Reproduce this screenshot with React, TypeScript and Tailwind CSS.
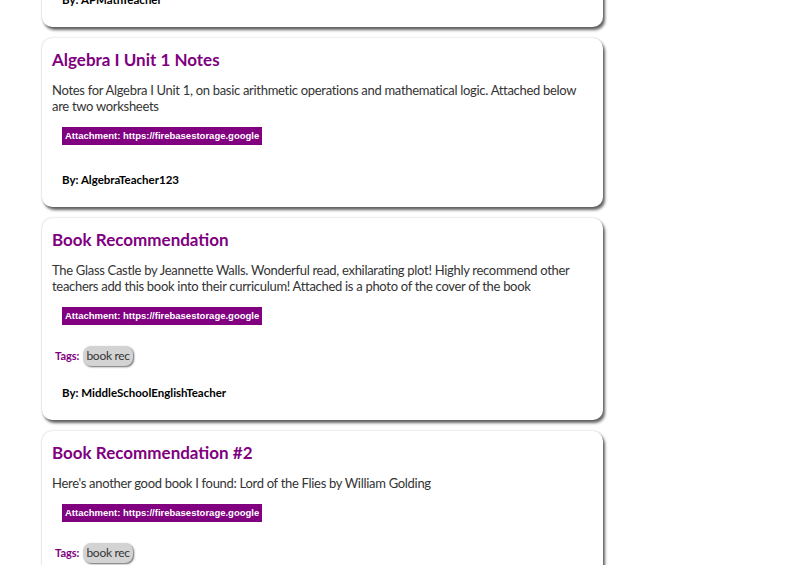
import React from 'react';

type Post = {
  title: string;
  body: string;
  attachment: string;
  tags: string[];
  author: string;
};

const posts: Post[] = [
  {
    title: 'AP Calculus Review',
    body: 'Practice problems for the upcoming AP exam.',
    attachment: 'https://firebasestorage.google',
    tags: [],
    author: 'APMathTeacher',
  },
  {
    title: 'Algebra I Unit 1 Notes',
    body: 'Notes for Algebra I Unit 1, on basic arithmetic operations and mathematical logic. Attached below are two worksheets',
    attachment: 'https://firebasestorage.google',
    tags: [],
    author: 'AlgebraTeacher123',
  },
  {
    title: 'Book Recommendation',
    body: 'The Glass Castle by Jeannette Walls. Wonderful read, exhilarating plot! Highly recommend other teachers add this book into their curriculum! Attached is a photo of the cover of the book',
    attachment: 'https://firebasestorage.google',
    tags: ['book rec'],
    author: 'MiddleSchoolEnglishTeacher',
  },
  {
    title: 'Book Recommendation #2',
    body: "Here's another good book I found: Lord of the Flies by William Golding",
    attachment: 'https://firebasestorage.google',
    tags: ['book rec'],
    author: 'MiddleSchoolEnglishTeacher',
  },
];

const PostCard: React.FC<{ post: Post; className?: string }> = ({ post, className = '' }) => (
  <div
    className={`w-[561px] rounded-[10px] bg-white pl-[10px] pr-[12px] pt-[10px] pb-[19px] shadow-[0_0_2px_rgba(0,0,0,0.25),2px_3px_3px_rgba(0,0,0,0.6)] ${className}`}
  >
    <h3 className="text-[17px] leading-[24px] font-bold text-[#800080]">{post.title}</h3>
    <p className="mt-[10px] text-[13px] leading-[16px] tracking-[-0.3px] text-[#333]">{post.body}</p>
    <div className="mt-[13px] ml-[10px] flex">
      <span className="h-[18px] bg-[#800080] px-[3px] font-['Liberation_Sans',Arial,sans-serif] text-[9.5px] leading-[18px] font-bold text-white">
        Attachment: {post.attachment}
      </span>
    </div>
    {post.tags.length > 0 && (
      <div className="mt-[21px] ml-[3px] flex h-[20px] items-center gap-[4px]">
        <span className="text-[11px] leading-[20px] font-bold text-[#800080]">Tags:</span>
        {post.tags.map((t) => (
          <span
            key={t}
            className="h-[20px] rounded-[8px] bg-[#d3d3d3] px-[3px] text-[12px] leading-[20px] tracking-[-0.3px] text-[#333] shadow-[1px_1px_2px_rgba(0,0,0,0.6)]"
          >
            {t}
          </span>
        ))}
      </div>
    )}
    <p className={`${post.tags.length > 0 ? 'mt-[19px]' : 'mt-[27px]'} ml-[10px] text-[11.5px] leading-[16px] font-bold text-black`}>
      By: {post.author}
    </p>
  </div>
);

export default function App() {
  return (
    <div className="min-h-screen overflow-hidden bg-white pl-[42px] font-['Lato','Open_Sans',sans-serif]">
      <div className="flex flex-col gap-[11px]">
        {posts.map((p, i) => (
          <PostCard key={i} post={p} className={i === 0 ? '-mt-[126px]' : ''} />
        ))}
      </div>
    </div>
  );
}
